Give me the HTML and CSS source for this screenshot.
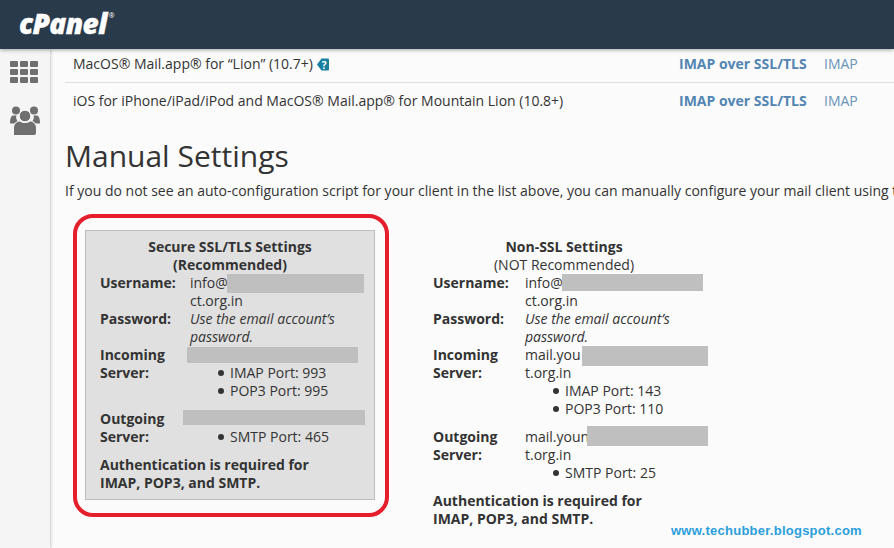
FILE: index.html
```html
<!DOCTYPE html>
<html lang="en">
<head>
<meta charset="utf-8">
<title>Manual Settings</title>
<link rel="stylesheet" href="styles.css">
</head>
<body>
<header class="topbar">
  <span class="logo">cPanel<sup class="logo-mark">®</sup></span>
</header>
<div class="shell">
  <nav class="sidebar">
    <svg class="nav-grid" width="28" height="22" viewBox="0 0 28 22" aria-hidden="true">
      <g fill="#6f6f6f">
        <rect x="0" y="0" width="8" height="6" rx="1"/><rect x="10" y="0" width="8" height="6" rx="1"/><rect x="20" y="0" width="8" height="6" rx="1"/>
        <rect x="0" y="8" width="8" height="6" rx="1"/><rect x="10" y="8" width="8" height="6" rx="1"/><rect x="20" y="8" width="8" height="6" rx="1"/>
        <rect x="0" y="16" width="8" height="6" rx="1"/><rect x="10" y="16" width="8" height="6" rx="1"/><rect x="20" y="16" width="8" height="6" rx="1"/>
      </g>
    </svg>
    <svg class="nav-users" width="30" height="29" viewBox="0 0 30 29" aria-hidden="true">
      <g fill="#6f6f6f">
        <circle cx="6" cy="4.500" r="4"/>
        <circle cx="24" cy="4.500" r="4"/>
        <path d="M0 17c0-4 1-7 3-7.500h3.500C5.800 11 6 13 7.500 15L4 17.500H1.500C.5 17.500 0 17.500 0 17z"/>
        <path d="M30 17c0-4-1-7-3-7.500h-3.500c.7 1.500.5 3.500-1 5.500l3.500 2.500h2.500c1 0 1.500 0 1.500-.5z"/>
        <circle cx="15" cy="10" r="5.800" stroke="#f5f5f5" stroke-width="1"/>
        <path d="M4 29v-7c0-4 3-6.500 6-6.500 1.500 1 3 1.500 5 1.500s3.500-.5 5-1.500c3 0 6 2.500 6 6.500v5c0 1.500-1 2-2.500 2z"/>
      </g>
    </svg>
  </nav>
  <main class="content">
    <div class="client-row first">
      <span>MacOS® Mail.app® for “Lion” (10.7+) <svg class="help" width="12" height="13" viewBox="0 0 12 13" aria-hidden="true"><path d="M4.500 0.500H11a1 1 0 0 1 1 1v10a1 1 0 0 1-1 1H4.500L0 6.500z" fill="#17809f"/><text x="7.200" y="10.500" class="help-q">?</text></svg></span>
      <a class="link-strong">IMAP over SSL/TLS</a>
      <a class="link">IMAP</a>
    </div>
    <div class="client-row">
      <span>iOS for iPhone/iPad/iPod and MacOS® Mail.app® for Mountain Lion (10.8+)</span>
      <a class="link-strong">IMAP over SSL/TLS</a>
      <a class="link">IMAP</a>
    </div>

    <h1 class="title">Manual Settings</h1>
    <p class="intro">If you do not see an auto-configuration script for your client in the list above, you can manually configure your mail client using the settings below:</p>

    <div class="panels">
      <div class="callout">
        <section class="panel secure">
          <div class="panel-title"><strong>Secure SSL/TLS Settings</strong><br><strong>(Recommended)</strong></div>
          <div class="setting">
            <b>Username:</b>
            <div><span class="line">info@<span class="redact r-user"></span></span>ct.org.in</div>
          </div>
          <div class="setting">
            <b>Password:</b>
            <div><em>Use the email account’s password.</em></div>
          </div>
          <div class="setting">
            <b>Incoming Server:</b>
            <div><span class="redact r-in"></span>
              <ul class="ports"><li>IMAP Port: 993</li><li>POP3 Port: 995</li></ul>
            </div>
          </div>
          <div class="setting">
            <b>Outgoing Server:</b>
            <div><span class="redact r-out"></span>
              <ul class="ports"><li>SMTP Port: 465</li></ul>
            </div>
          </div>
          <p class="auth">Authentication is required for IMAP, POP3, and SMTP.</p>
        </section>
      </div>

      <section class="panel plain">
        <div class="panel-title"><strong>Non-SSL Settings</strong><br>(NOT Recommended)</div>
        <div class="setting">
          <b>Username:</b>
          <div><span class="line">info@<span class="redact p-user"></span></span>ct.org.in</div>
        </div>
        <div class="setting">
          <b>Password:</b>
          <div><em>Use the email account’s password.</em></div>
        </div>
        <div class="setting">
          <b>Incoming Server:</b>
          <div><span class="line">mail.you<span class="redact p-in"></span></span>t.org.in
            <ul class="ports"><li>IMAP Port: 143</li><li>POP3 Port: 110</li></ul>
          </div>
        </div>
        <div class="setting">
          <b>Outgoing Server:</b>
          <div><span class="line">mail.youn<span class="redact p-out"></span></span>t.org.in
            <ul class="ports"><li>SMTP Port: 25</li></ul>
          </div>
        </div>
        <p class="auth">Authentication is required for IMAP, POP3, and SMTP.</p>
      </section>
    </div>
  </main>
</div>
<div class="watermark">www.techubber.blogspot.com</div>
</body>
</html>
```

FILE: styles.css
```css
* { box-sizing: border-box; }

html, body {
  height: 100%;
  overflow: hidden;
}

body {
  margin: 0;
  display: flex;
  flex-direction: column;
  background: #fbfbfb;
  color: #333;
  font-family: "Open Sans", "Noto Sans", sans-serif;
  font-size: 14px;
  line-height: 18px;
}

.topbar {
  position: relative;
  z-index: 2;
  flex: 0 0 49px;
  display: flex;
  align-items: center;
  padding-left: 19px;
  background: #293a4b;
  box-shadow: 0 1px 4px rgba(0, 0, 0, .35);
}

.logo {
  color: #fff;
  font-family: "Open Sans", sans-serif;
  font-style: italic;
  font-weight: 800;
  font-size: 28px;
  line-height: 30px;
  letter-spacing: -.6px;
  -webkit-text-stroke: .4px #fff;
  margin-top: -3px;
}

.logo-mark {
  font-size: 7px;
  font-weight: 400;
  font-style: normal;
  letter-spacing: 0;
  -webkit-text-stroke: 0;
  vertical-align: 16px;
  line-height: 0;
  margin-left: 2px;
}

.shell {
  flex: 1;
  display: flex;
  min-height: 0;
}

.sidebar {
  flex: 0 0 50px;
  display: flex;
  flex-direction: column;
  align-items: center;
  padding-top: 12px;
  gap: 23px;
  background: #f5f5f5;
  box-shadow: 1px 0 3px rgba(0, 0, 0, .2);
}

.nav-grid { margin-left: -2px; }
.nav-users { margin-left: 0; }

.content {
  flex: 1;
  min-width: 0;
  padding-left: 15px;
}

.client-row {
  display: grid;
  grid-template-columns: 615px 144px 1fr;
  padding: 8px;
  line-height: 20px;
  height: 37px;
}

.client-row.first {
  padding-top: 5px;
  height: 34px;
  border-bottom: 1px solid #dfdfdf;
}

.client-row > :first-child {
  white-space: nowrap;
}

.client-row > .link-strong {
  margin-left: -9px;
}

.client-row > .link {
  margin-left: -8px;
}

.help {
  vertical-align: -2px;
}

.help-q {
  fill: #fff;
  font-family: "Open Sans", sans-serif;
  font-size: 10px;
  font-weight: 700;
  text-anchor: middle;
}

.link-strong {
  color: #5285b2;
  font-weight: 700;
}

.link {
  color: #6a94b8;
}

.title {
  margin: 16px 0 0;
  font-size: 30px;
  font-weight: 400;
  line-height: 40px;
  color: #333;
}

.intro {
  margin: 5px 0 0;
  line-height: 20px;
  white-space: nowrap;
}

.panels {
  display: flex;
  align-items: flex-start;
  margin: 13px 0 0 8px;
}

.callout {
  width: 316px;
  height: 303px;
  padding: 12px 10px 13px 8px;
  border: 4px solid #e41e2b;
  border-radius: 20px;
  background: #fbfbfb;
}

.panel {
  line-height: 18px;
}

.panel.secure {
  width: 290px;
  height: 270px;
  padding: 7px 14px;
  border: 1px solid #bdbdbd;
  background: #e0e0e0;
}

.panel.plain {
  width: 292px;
  margin: 20px 0 0 29px;
  padding: 4px 15px;
}

.panel-title {
  text-align: center;
}

.setting {
  display: grid;
  grid-template-columns: 90px 1fr;
}

.plain .setting {
  grid-template-columns: 92px 1fr;
}

.setting b {
  padding-right: 8px;
}

.line {
  display: block;
  white-space: nowrap;
}

.ports {
  margin: 0 0 10px;
  padding: 0 0 0 40px;
  list-style: none;
}

.ports li::before {
  content: "";
  display: inline-block;
  width: 6px;
  height: 6px;
  margin: 0 7px 2px -13px;
  transform: translateX(1px);
  border-radius: 50%;
  background: #333;
}

.auth {
  margin: 0;
  max-width: 230px;
  font-weight: 700;
}

.redact {
  display: inline-block;
  background: #bfbfbf;
  vertical-align: top;
}

.r-user { width: 137px; height: 19px; margin: 0 0 -1px -1px; }
.r-in { display: block; width: 171px; height: 16px; margin: 1px 0 1px -3px; }
.r-out { display: block; width: 182px; height: 15px; margin: 0 0 3px -7px; }
.p-user { width: 141px; height: 17px; margin-left: -1px; }
.p-in { width: 126px; height: 20px; margin: 0 0 -2px 1px; }
.p-out { width: 121px; height: 20px; margin: -2px 0 0 -2px; }

.watermark {
  position: absolute;
  left: 671px;
  top: 523px;
  color: #2a9fdb;
  font-family: "Liberation Sans", Arial, sans-serif;
  font-size: 13px;
  font-weight: 700;
  line-height: 16px;
  letter-spacing: .25px;
}
```
